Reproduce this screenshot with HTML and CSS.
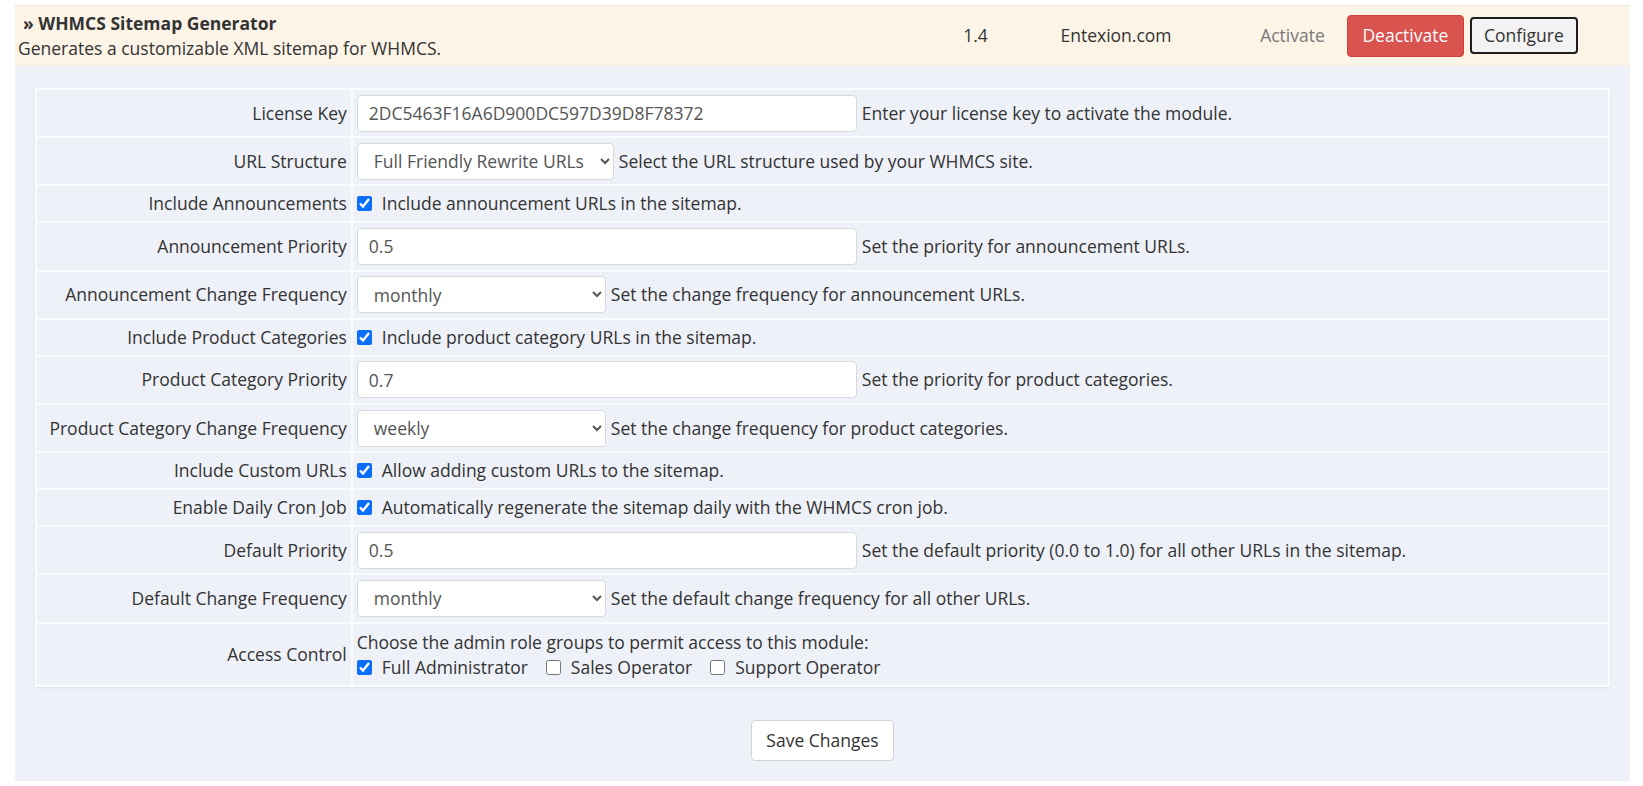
FILE: index.html
```html
<!DOCTYPE html>
<html lang="en">
<head>
<meta charset="utf-8">
<title>WHMCS Sitemap Generator</title>
<link rel="stylesheet" href="styles.css">
</head>
<body>
<div class="page">
  <div class="module-row">
    <div class="module-name">
      <div class="module-title">» WHMCS Sitemap Generator</div>
      <div class="module-desc">Generates a customizable XML sitemap for WHMCS.</div>
    </div>
    <div class="module-version">1.4</div>
    <div class="module-author">Entexion.com</div>
    <div class="module-actions">
      <span class="link-disabled">Activate</span>
      <button class="btn btn-danger" type="button">Deactivate</button>
      <button class="btn btn-configure" type="button">Configure</button>
    </div>
  </div>

  <div class="config-panel">
    <table class="form-table">
      <tr class="row-input">
        <td class="fieldlabel">License Key</td>
        <td class="fieldarea"><div class="field"><input class="text wide" type="text" value="2DC5463F16A6D900DC597D39D8F78372"><span>Enter your license key to activate the module.</span></div></td>
      </tr>
      <tr class="row-input">
        <td class="fieldlabel">URL Structure</td>
        <td class="fieldarea"><div class="field"><select class="sel sel-url"><option>Full Friendly Rewrite URLs</option></select><span>Select the URL structure used by your WHMCS site.</span></div></td>
      </tr>
      <tr>
        <td class="fieldlabel">Include Announcements</td>
        <td class="fieldarea"><label class="check"><input type="checkbox" checked><span>Include announcement URLs in the sitemap.</span></label></td>
      </tr>
      <tr class="row-input">
        <td class="fieldlabel">Announcement Priority</td>
        <td class="fieldarea"><div class="field"><input class="text wide" type="text" value="0.5"><span>Set the priority for announcement URLs.</span></div></td>
      </tr>
      <tr class="row-input">
        <td class="fieldlabel">Announcement Change Frequency</td>
        <td class="fieldarea"><div class="field"><select class="sel sel-freq"><option>monthly</option></select><span>Set the change frequency for announcement URLs.</span></div></td>
      </tr>
      <tr>
        <td class="fieldlabel">Include Product Categories</td>
        <td class="fieldarea"><label class="check"><input type="checkbox" checked><span>Include product category URLs in the sitemap.</span></label></td>
      </tr>
      <tr class="row-input">
        <td class="fieldlabel">Product Category Priority</td>
        <td class="fieldarea"><div class="field"><input class="text wide" type="text" value="0.7"><span>Set the priority for product categories.</span></div></td>
      </tr>
      <tr class="row-input">
        <td class="fieldlabel">Product Category Change Frequency</td>
        <td class="fieldarea"><div class="field"><select class="sel sel-freq"><option>weekly</option></select><span>Set the change frequency for product categories.</span></div></td>
      </tr>
      <tr>
        <td class="fieldlabel">Include Custom URLs</td>
        <td class="fieldarea"><label class="check"><input type="checkbox" checked><span>Allow adding custom URLs to the sitemap.</span></label></td>
      </tr>
      <tr>
        <td class="fieldlabel">Enable Daily Cron Job</td>
        <td class="fieldarea"><label class="check"><input type="checkbox" checked><span>Automatically regenerate the sitemap daily with the WHMCS cron job.</span></label></td>
      </tr>
      <tr class="row-input">
        <td class="fieldlabel">Default Priority</td>
        <td class="fieldarea"><div class="field"><input class="text wide" type="text" value="0.5"><span>Set the default priority (0.0 to 1.0) for all other URLs in the sitemap.</span></div></td>
      </tr>
      <tr class="row-input">
        <td class="fieldlabel">Default Change Frequency</td>
        <td class="fieldarea"><div class="field"><select class="sel sel-freq"><option>monthly</option></select><span>Set the default change frequency for all other URLs.</span></div></td>
      </tr>
      <tr class="row-access">
        <td class="fieldlabel">Access Control</td>
        <td class="fieldarea">
          <div>Choose the admin role groups to permit access to this module:</div>
          <div class="roles">
            <label class="check"><input type="checkbox" checked><span>Full Administrator</span></label>
            <label class="check"><input type="checkbox"><span>Sales Operator</span></label>
            <label class="check"><input type="checkbox"><span>Support Operator</span></label>
          </div>
        </td>
      </tr>
    </table>
    <div class="save-bar">
      <button class="btn btn-save" type="button">Save Changes</button>
    </div>
  </div>
</div>
</body>
</html>
```

FILE: styles.css
```css
html, body {
  margin: 0;
  padding: 0;
  background: #ffffff;
}

body {
  font-family: "Open Sans", "Liberation Sans", sans-serif;
  font-size: 17.5px;
  line-height: 25px;
  color: #333333;
}

.page {
  padding: 5px 13px 0 15px;
}

/* module header row */
.module-row {
  display: grid;
  grid-template-columns: 898px 124px 157px 1fr;
  background: #fcf4e7;
  border-top: 1px solid #e8e8e8;
  border-bottom: 1px solid #f3ede4;
}

.module-row > div {
  display: flex;
  align-items: center;
  border-left: 1px solid #f7efe2;
}

.module-row > .module-name {
  display: block;
  border-left: 0;
  padding: 5px 3px 4px 3px;
}

.module-title {
  font-weight: 700;
  padding-left: 5px;
}

.module-version,
.module-author {
  justify-content: center;
}

.module-actions {
  justify-content: center;
  gap: 6px;
  padding-left: 13px;
}

.link-disabled {
  color: #7a7a7a;
  margin-right: 16px;
}

.btn {
  font-family: "Open Sans", "Liberation Sans", sans-serif;
  font-size: 17.5px;
  line-height: 25px;
  border-radius: 4px;
  cursor: pointer;
}

.btn-danger {
  background: #d9534f;
  color: #ffffff;
  border: 1px solid #d43f3a;
  height: 42px;
  width: 117px;
  padding: 0;
}

.btn-configure {
  background: #f3f3f3;
  color: #333333;
  border: 2px solid #1e1e1e;
  height: 37px;
  width: 108px;
  padding: 0;
}

/* config panel */
.config-panel {
  background: #eef1f8;
  padding: 22px 20px 20px 20px;
}

.form-table {
  width: 100%;
  border-collapse: separate;
  border-spacing: 2px;
  background: #fafbfd;
  box-shadow: 0 1px 2px rgba(0, 0, 0, 0.08);
}

.form-table td {
  background: #eef1f8;
  padding: 5px 4px;
  vertical-align: middle;
}

.form-table td.fieldlabel {
  width: 20%;
  text-align: right;
  white-space: nowrap;
}

.form-table .row-input td {
  padding-top: 4.6px;
  padding-bottom: 4.6px;
}

.form-table .row-access td {
  padding-top: 6px;
  padding-bottom: 5.5px;
}

.field {
  display: flex;
  align-items: center;
  gap: 5px;
}

.text {
  font-family: "Open Sans", "Liberation Sans", sans-serif;
  font-size: 17.5px;
  color: #555555;
  height: 37px;
  box-sizing: border-box;
  border: 1px solid #d6d9de;
  border-radius: 4px;
  padding: 0 11px;
  background: #ffffff;
}

.wide {
  width: 500px;
}

.sel {
  font-family: "Open Sans", "Liberation Sans", sans-serif;
  font-size: 17.5px;
  color: #555555;
  height: 37px;
  box-sizing: border-box;
  border: 1px solid #d6d9de;
  border-radius: 4px;
  padding: 0 8px 0 12px;
  background: #ffffff;
}

.sel-url {
  width: 257px;
}

.sel-freq {
  width: 249px;
}

.check {
  display: flex;
  width: fit-content;
  align-items: center;
  gap: 10px;
  height: 25px;
}

.check input {
  width: 15px;
  height: 15px;
  margin: 0;
  accent-color: #0b6ef9;
}

.roles {
  display: flex;
  gap: 18px;
}

.save-bar {
  display: flex;
  justify-content: center;
  padding-top: 33px;
}

.btn-save {
  background: #ffffff;
  color: #333333;
  border: 1px solid #cfd3d8;
  height: 41px;
  width: 143px;
  padding: 0;
}
```
